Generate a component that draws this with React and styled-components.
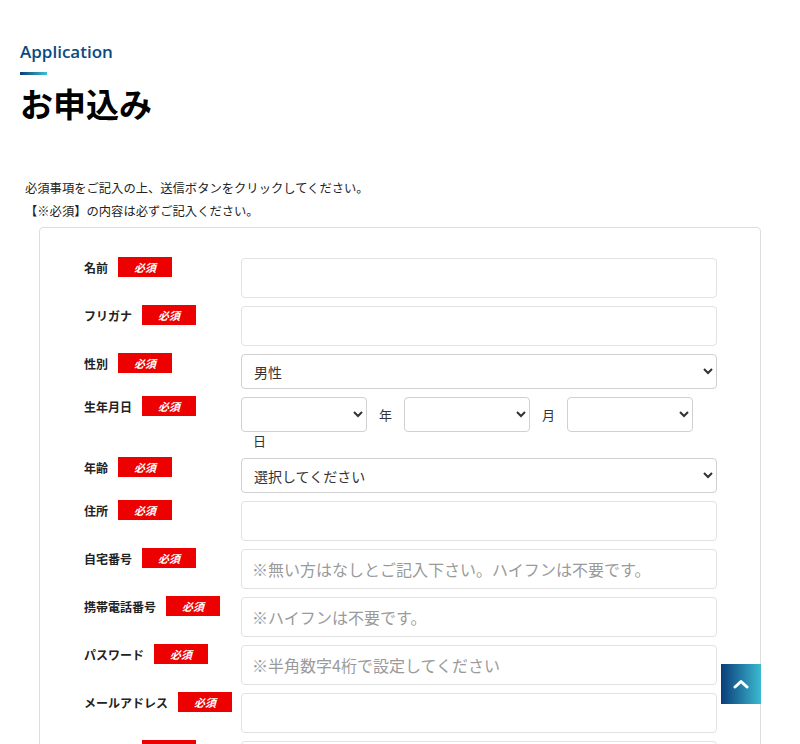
import styled, { createGlobalStyle } from "styled-components";

const GlobalStyle = createGlobalStyle`
  body {
    margin: 0;
    background: #fff;
    font-family: "Noto Sans CJK JP", "Noto Sans", sans-serif;
    color: #222;
  }
`;

const Page = styled.div`
  padding: 40px 20px 40px;
`;

const EnTitle = styled.div`
  font-family: "Open Sans", "Noto Sans CJK JP", sans-serif;
  font-weight: 600;
  font-size: 17px;
  line-height: 24px;
  color: #0b4a80;
`;

const TitleBar = styled.div`
  width: 27px;
  height: 3px;
  margin-top: 8px;
  background: linear-gradient(to right, #0a3d7a, #3bc0d8);
`;

const Title = styled.h1`
  margin: 8px 0 0;
  font-size: 33px;
  line-height: 40px;
  font-weight: 700;
  color: #000;
`;

const Intro = styled.p`
  margin: 54px 0 0 5px;
  font-size: 12.3px;
  line-height: 23px;
  color: #222;
`;

const Card = styled.div`
  margin: 4px 19px 0;
  border: 1px solid #ddd;
  border-radius: 4px;
  padding: 30px 43px 40px 44px;
`;

const Row = styled.div`
  display: grid;
  grid-template-columns: 157px 1fr;
  margin-bottom: 8px;
`;

const LabelCell = styled.div`
  display: flex;
  align-items: center;
  gap: 10px;
  height: 20px;
  margin-top: -1px;
`;

const Label = styled.span`
  font-size: 12px;
  font-weight: 700;
  color: #222;
  white-space: nowrap;
`;

const Badge = styled.span`
  display: inline-flex;
  align-items: center;
  justify-content: center;
  width: 54px;
  height: 20px;
  flex-shrink: 0;
  background: #ec0000;
  color: #fff;
  font-size: 11px;
  font-weight: 700;
  font-style: italic;
`;

const TextInput = styled.input`
  box-sizing: border-box;
  width: 100%;
  height: 40px;
  border: 1px solid #e2e2e2;
  border-radius: 4px;
  padding: 0 10px;
  font-family: inherit;
  font-size: 16px;
  color: #333;
  &::placeholder {
    color: #9a9a9a;
  }
`;

const Select = styled.select`
  box-sizing: border-box;
  width: ${(p) => p.$width || "100%"};
  height: 35px;
  border: 1px solid #d0d0d0;
  border-radius: 4px;
  padding: 0 8px;
  background: #fff;
  font-family: inherit;
  font-size: 14px;
  color: #333;
`;

const DateWrap = styled.div`
  display: flex;
  flex-wrap: wrap;
  align-items: center;
`;

const Unit = styled.span`
  margin: 0 12px;
  font-size: 13px;
  line-height: 18px;
  color: #333;
`;

const ToTop = styled.a`
  position: fixed;
  right: 39px;
  bottom: 40px;
  width: 40px;
  height: 40px;
  display: flex;
  align-items: center;
  justify-content: center;
  background: linear-gradient(to right, #0a3d7a, #3bbad0);
`;

const fields = [
  { label: "名前", type: "text" },
  { label: "フリガナ", type: "text" },
  { label: "性別", type: "select", value: "男性" },
  { label: "生年月日", type: "date" },
  { label: "年齢", type: "select", value: "選択してください" },
  { label: "住所", type: "text" },
  { label: "自宅番号", type: "text", ph: "※無い方はなしとご記入下さい。ハイフンは不要です。" },
  { label: "携帯電話番号", type: "text", ph: "※ハイフンは不要です。" },
  { label: "パスワード", type: "text", ph: "※半角数字4桁で設定してください" },
  { label: "メールアドレス", type: "text" },
  { label: "郵便番号", type: "text" },
  { label: "都道府県", type: "text" },
];

function Field({ f }) {
  if (f.type === "select") {
    return (
      <Select defaultValue={f.value}>
        <option>{f.value}</option>
      </Select>
    );
  }
  if (f.type === "date") {
    return (
      <DateWrap>
        <Select $width="126px"><option></option></Select>
        <Unit>年</Unit>
        <Select $width="126px"><option></option></Select>
        <Unit>月</Unit>
        <Select $width="126px"><option></option></Select>
        <Unit>日</Unit>
      </DateWrap>
    );
  }
  return <TextInput placeholder={f.ph} />;
}

export default function App() {
  return (
    <Page>
      <GlobalStyle />
      <EnTitle>Application</EnTitle>
      <TitleBar />
      <Title>お申込み</Title>
      <Intro>
        必須事項をご記入の上、送信ボタンをクリックしてください。
        <br />
        【※必須】の内容は必ずご記入ください。
      </Intro>
      <Card>
        {fields.map((f) => (
          <Row key={f.label}>
            <LabelCell>
              <Label>{f.label}</Label>
              <Badge>必須</Badge>
            </LabelCell>
            <Field f={f} />
          </Row>
        ))}
      </Card>
      <ToTop href="#">
        <svg width="16" height="10" viewBox="0 0 16 10" fill="none">
          <path d="M2 8 L8 2.5 L14 8" stroke="#fff" strokeWidth="3" strokeLinecap="round" strokeLinejoin="round" />
        </svg>
      </ToTop>
    </Page>
  );
}
